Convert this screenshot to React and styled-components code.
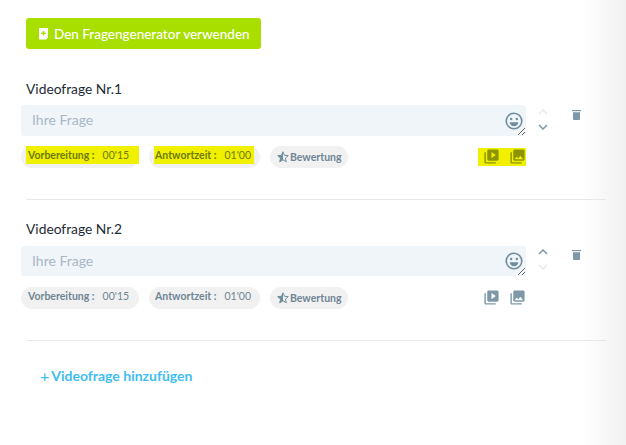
import styled, { createGlobalStyle } from "styled-components";
import { MdVideoLibrary, MdPhotoLibrary } from "react-icons/md";

const questions = [
  { id: 1, up: false, down: true, marked: true },
  { id: 2, up: true, down: false, marked: false },
];

const Smiley = () => (
  <svg width="18" height="18" viewBox="0 0 18 18">
    <circle cx="9" cy="9" r="7.800" fill="none" stroke="#6f8c9c" strokeWidth="1.600" />
    <circle cx="6.200" cy="7" r="1.200" fill="#6f8c9c" />
    <circle cx="11.800" cy="7" r="1.200" fill="#6f8c9c" />
    <path d="M4.600 10.200h8.800c-.5 2.600-2.200 4-4.400 4s-3.900-1.400-4.400-4z" fill="#6f8c9c" />
  </svg>
);

const Star = () => (
  <svg width="12" height="12" viewBox="0 0 12 12">
    <path d="M6 .8l1.500 3.500 3.800.3-2.900 2.500.9 3.700L6 8.800l-3.300 2 .9-3.700L.7 4.600l3.800-.3z" fill="none" stroke="#6f8c9c" strokeWidth="1" />
    <path d="M6 .8v8l-3.300 2 .9-3.700L.7 4.600l3.800-.3z" fill="#6f8c9c" />
  </svg>
);

const Trash = () => (
  <svg width="9" height="10" viewBox="0 0 9 10">
    <rect width="9" height="1.200" fill="#7d99a8" />
    <path d="M1 2.200h7V9a1 1 0 0 1-1 1H2a1 1 0 0 1-1-1z" fill="#7d99a8" />
  </svg>
);

const Chevron = ({ up, active }) => (
  <svg width="10" height="6" viewBox="0 0 10 6">
    <path
      d={up ? "M1 5l4-4 4 4" : "M1 1l4 4 4-4"}
      fill="none"
      stroke={active ? "#7d99a8" : "#e3ebf0"}
      strokeWidth="1.500"
    />
  </svg>
);

const GeneratorIcon = () => (
  <svg width="11" height="12" viewBox="0 0 11 12">
    <path d="M1 0h9v9.500L8 11.500H1z" fill="#fff" />
    <path d="M4.800 3h1.400v1.500h1.500v1.400H6.200v1.500H4.800V5.900H3.300V4.500h1.500z" fill="#a9df00" />
  </svg>
);

const Question = ({ id, up, down, marked }) => (
  <Section>
    <Title>Videofrage Nr.{id}</Title>
    <InputRow>
      <InputWrap>
        <QuestionInput placeholder="Ihre Frage" $tall={id === 1} />
        <EmojiButton>
          <Smiley />
        </EmojiButton>
      </InputWrap>
      <Arrows>
        <Chevron up active={up} />
        <Chevron active={down} />
      </Arrows>
      <TrashButton>
        <Trash />
      </TrashButton>
    </InputRow>
    <OptionsRow>
      <Pill>
        <PillText $marked={marked}>
          <b>Vorbereitung :</b>
          <Value>00'15</Value>
        </PillText>
      </Pill>
      <Pill>
        <PillText $marked={marked}>
          <b>Antwortzeit :</b>
          <Value>01'00</Value>
        </PillText>
      </Pill>
      <RatingPill>
        <Star />
        <b>Bewertung</b>
      </RatingPill>
      <MediaIcons>
        <MediaButton $marked={marked}>
          <MdVideoLibrary size={17} />
        </MediaButton>
        <MediaButton $marked={marked}>
          <MdPhotoLibrary size={17} />
        </MediaButton>
      </MediaIcons>
    </OptionsRow>
    <Divider />
  </Section>
);

const App = () => (
  <>
    <GlobalStyle />
    <Page>
      <GeneratorButton>
        <GeneratorIcon />
        Den Fragengenerator verwenden
      </GeneratorButton>
      {questions.map((q) => (
        <Question key={q.id} {...q} />
      ))}
      <AddLink>
        <Plus>+</Plus>Videofrage hinzufügen
      </AddLink>
    </Page>
  </>
);

export default App;

const GlobalStyle = createGlobalStyle`
  html, body {
    margin: 0;
    height: 100%;
    overflow: hidden;
    background: #fff;
  }
  body {
    font-family: Lato, "Noto Sans", sans-serif;
  }
`;

const Page = styled.div`
  width: 626px;
  height: 445px;
  box-sizing: border-box;
  padding: 18px 0 0 21px;
  background: linear-gradient(90deg, #fff 0, #fff 582px, #f1f1f1 626px);
`;

const GeneratorButton = styled.button`
  display: flex;
  align-items: center;
  gap: 5px;
  width: 235px;
  height: 31px;
  margin: 0 0 0 5px;
  padding: 0 0 0 12px;
  border: 0;
  border-radius: 3px;
  background: #a9df00;
  color: #fff;
  font: 500 13.500px Lato, sans-serif;
`;

const Section = styled.section`
  padding-top: 19px;
  &:first-of-type {
    padding-top: 30px;
  }
`;

const Title = styled.div`
  margin: 0 0 7px 5px;
  height: 19px;
  line-height: 19px;
  font-size: 13.800px;
  color: #1d2b36;
`;

const InputRow = styled.div`
  display: flex;
  align-items: flex-start;
`;

const InputWrap = styled.div`
  position: relative;
  width: 505px;
`;

const QuestionInput = styled.textarea`
  display: block;
  box-sizing: border-box;
  width: 505px;
  height: ${(p) => (p.$tall ? "31px" : "30px")};
  margin: ${(p) => (p.$tall ? "0" : "1px 0")};
  padding: 6px 11px;
  border: 0;
  border-radius: 3px;
  outline: 0;
  background: #f0f5fa;
  font: 14px Lato, sans-serif;
  &::placeholder {
    color: #a9b8c6;
  }
`;

const EmojiButton = styled.span`
  position: absolute;
  top: 7px;
  right: 3px;
  display: flex;
`;

const Arrows = styled.div`
  display: flex;
  flex-direction: column;
  align-items: center;
  gap: 9px;
  width: 10px;
  margin: 4px 0 0 12px;
`;

const TrashButton = styled.span`
  display: flex;
  margin: 5px 0 0 24px;
`;

const OptionsRow = styled.div`
  display: flex;
  align-items: flex-start;
  gap: 10px;
  width: 505px;
  margin-top: 10px;
`;

const Pill = styled.div`
  display: flex;
  height: 22px;
  box-sizing: border-box;
  padding: 0 0 0 5px;
  border-radius: 11px;
  background: #f1f1f1;
  font-size: 10.500px;
  color: #6f8594;
  b {
    font-weight: 700;
  }
  &:nth-child(2) {
    padding-right: 6px;
  }
`;

const PillText = styled.span`
  display: flex;
  align-items: center;
  gap: 8px;
  height: 18px;
  padding: 0 10px 0 2px;
  background: ${(p) => (p.$marked ? "#f0f000" : "transparent")};
  color: ${(p) => (p.$marked ? "#6f7a00" : "#6f8594")};
  ${Pill}:nth-child(2) & {
    padding: 0 3px 0 1px;
  }
`;

const Value = styled.span`
  font-weight: 400;
`;

const RatingPill = styled(Pill)`
  align-items: center;
  gap: 1px;
  padding: 0 6px 0 7px;
`;

const MediaIcons = styled.div`
  display: flex;
  margin: 2px 0 0 auto;
`;

const MediaButton = styled.span`
  display: flex;
  justify-content: flex-end;
  width: 26px;
  height: 18px;
  background: ${(p) => (p.$marked ? "#f0f000" : "transparent")};
  color: ${(p) => (p.$marked ? "#8c9400" : "#7d99a8")};
  &:first-child {
    justify-content: center;
    padding-left: 1px;
    width: 25px;
  }
  &:last-child {
    width: 22px;
  }
`;

const Divider = styled.hr`
  width: 580px;
  height: 1px;
  margin: 31px 0 0 5px;
  border: 0;
  background: #e8e8e8;
`;

const AddLink = styled.a`
  display: flex;
  align-items: center;
  gap: 2px;
  margin: 24px 0 0 19px;
  height: 20px;
  font-size: 14px;
  font-weight: 700;
  color: #3fbdf0;
`;

const Plus = styled.span`
  font-size: 16px;
  font-weight: 400;
`;
